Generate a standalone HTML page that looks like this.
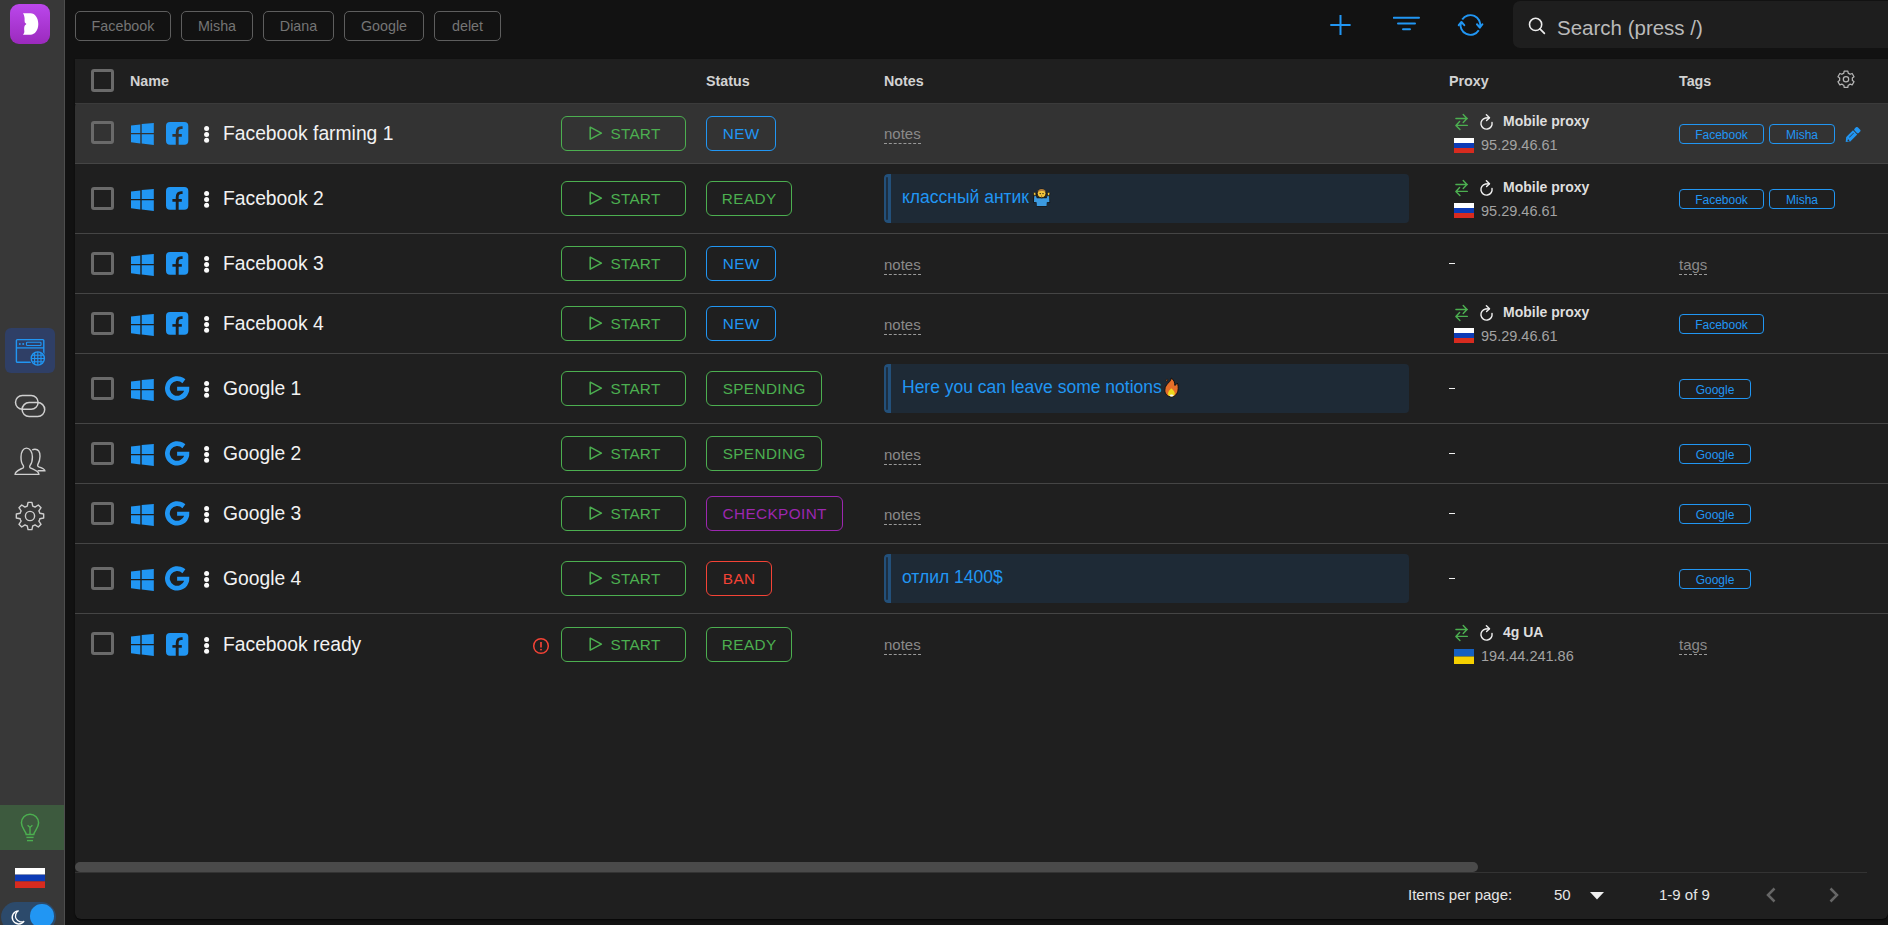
<!DOCTYPE html><html><head><meta charset="utf-8"><style>
*{box-sizing:border-box;margin:0;padding:0}
svg{display:block}
.emo{display:inline-block;vertical-align:top}
html,body{width:1888px;height:925px;overflow:hidden;background:#121212;font-family:"Liberation Sans",sans-serif;position:relative}
.a{position:absolute}
#side{left:0;top:0;width:65px;height:925px;background:#383838;border-right:1px solid #4e4e4e}
#logo{left:10px;top:4px;width:40px;height:40px;border-radius:9px;background:linear-gradient(180deg,#bb47ec,#9b2abd)}
.chip{top:11px;height:30px;border:1px solid #5e5e5e;border-radius:5px;color:#757575;font-size:14.3px;line-height:28px;text-align:center}
#search{left:1513px;top:1px;width:400px;height:47px;background:#1e1e1e;border-radius:7px}
#search .t{left:44px;top:2.5px;line-height:47px;font-size:20.5px;color:#bababa}
#tbl{left:75px;top:59px;width:1813px;height:860px;background:#1f1f1f;border-radius:0 0 6px 6px;overflow:hidden;box-shadow:0 1px 1.5px rgba(0,0,0,0.7)}
.hd{top:0;font-weight:bold;font-size:14.3px;color:#d2d2d2;line-height:44px}
.row{left:0;width:1813px}
.bd{border-bottom:1px solid #454545}
.cb{width:23px;height:23px;border:3px solid #6a6a6a;border-radius:3px}
.name{left:148px;font-size:19.3px;color:#f2f2f2;white-space:nowrap}
.btn{left:486px;width:125px;height:35px;border:1.5px solid #4caf50;border-radius:6px;color:#4caf50;font-size:15.3px;letter-spacing:0.25px;line-height:33px}
.st{left:631px;height:35px;border:1.5px solid;border-radius:6px;font-size:15.3px;letter-spacing:0.4px;line-height:33px;text-align:center;padding-left:0.4px}
.ph{font-size:15px;color:#8a8a8a;border-bottom:1px dashed #999;line-height:18px;white-space:nowrap}
.nbox{left:809px;width:525px;height:49px;background:#1e2a36;border-radius:4px;overflow:hidden}
.nbox .bar{left:0;top:0;width:7px;height:49px;background:#23507a;border-radius:4px 0 0 4px}
.nbox .bar2{left:2px;top:3px;width:2px;height:43px;background:#1c2f42;border-radius:1px}
.nbox .t{left:18px;top:0;line-height:47px;font-size:17.5px;color:#2196f3;white-space:nowrap}
.pn{font-weight:bold;font-size:14px;color:#dedede;white-space:nowrap}
.ip{font-size:14.5px;color:#a3a3a3;white-space:nowrap}
.tag{height:20px;border:1.5px solid #2196f3;border-radius:4px;color:#2196f3;font-size:12px;line-height:20.5px;text-align:center}
.dash{width:6px;height:1px;background:#f0f0f0}
</style></head><body>
<div id="side" class="a"></div>
<div id="logo" class="a"></div>
<div class="a" style="left:10px;top:4px"><svg width="40" height="40" viewBox="0 0 40 40" ><path d="M13 9.3 H20.5 C25 9.3 28.3 14.2 28.3 20 C28.3 26 25 30.7 20.5 30.7 H13 C14 29.5 14.5 28.5 14.3 27 C14.1 25 14 23 14.8 21.6 L16.4 20 L14.8 18.4 C14.4 16.5 14.8 14.8 14.4 13 C14.2 11.5 13.8 10.3 13 9.3 Z" fill="#fff"/></svg></div>
<div class="a" style="left:5px;top:328px;width:50px;height:45px;border-radius:6px;background:#2f3f66"></div>
<div class="a" style="left:15px;top:338px"><svg width="31" height="29" viewBox="0 0 31 29" ><rect x="1.4" y="1.6" width="27.4" height="22.6" rx="1" fill="none" stroke="#2196f3" stroke-width="1.4"/><line x1="1.4" y1="9.9" x2="28.8" y2="9.9" stroke="#2196f3" stroke-width="1.3"/><circle cx="4.8" cy="5.9" r="1" fill="#2196f3"/><circle cx="8.2" cy="5.9" r="1" fill="#2196f3"/><rect x="11.5" y="4.3" width="14.5" height="3.2" rx="0.8" fill="none" stroke="#2196f3" stroke-width="1.1"/><circle cx="22.8" cy="20.5" r="8" fill="#2f3f66"/><circle cx="22.8" cy="20.5" r="6.6" fill="none" stroke="#2196f3" stroke-width="1.4"/><clipPath id="gc"><circle cx="22.8" cy="20.5" r="6.4"/></clipPath><g clip-path="url(#gc)" stroke="#2196f3" stroke-width="1.1"><line x1="19.6" y1="13" x2="19.6" y2="28"/><line x1="26" y1="13" x2="26" y2="28"/><line x1="15" y1="17.3" x2="31" y2="17.3"/><line x1="15" y1="20.5" x2="31" y2="20.5"/><line x1="15" y1="23.7" x2="31" y2="23.7"/><line x1="22.8" y1="13" x2="22.8" y2="28"/></g></svg></div>
<div class="a" style="left:14px;top:394px"><svg width="32" height="24" viewBox="0 0 32 24" ><rect x="1.5" y="1.4" width="22.6" height="13.8" rx="6.9" fill="none" stroke="#cfcfcf" stroke-width="1.5"/><rect x="8.1" y="8.6" width="22.6" height="14" rx="7" fill="none" stroke="#cfcfcf" stroke-width="1.5"/></svg></div>
<div class="a" style="left:14px;top:447px"><svg width="32" height="29" viewBox="0 0 32 29" ><path d="M18.2 2.8 C19.2 2.3 20.2 2.2 21 2.2 C24 2.2 26 5 26 9.2 C26 12.6 25 15.4 23.8 17.6 C23.4 18.6 23.8 19.4 24.8 19.8 C28.4 21 30.9 22 30.9 23.8 H23.6" fill="none" stroke="#cfcfcf" stroke-width="1.4"/><path d="M1.1 27.4 C1.1 24 5 23 9.2 20.8 C9.8 20.4 9.6 19 9 18.2 C7.6 16.4 7 13.6 7 10 C7 4.6 9.2 1.1 12.5 1.1 C15.8 1.1 18.4 4.6 18.4 10 C18.4 13.6 17.6 16.4 16.2 18.2 C15.6 19 15.4 20.4 16.2 20.8 C20.4 23 24.9 24 24.9 27.4 Z" fill="#383838" stroke="#cfcfcf" stroke-width="1.4"/></svg></div>
<div class="a" style="left:15px;top:501px"><svg width="30" height="30" viewBox="0 0 30 30" ><path d="M24.50 11.28 L24.83 12.27 L28.66 13.06 L28.66 16.94 L24.83 17.73 L24.50 18.72 L24.35 19.09 L23.88 20.02 L26.04 23.29 L23.29 26.04 L20.02 23.88 L19.09 24.35 L18.72 24.50 L17.73 24.83 L16.94 28.66 L13.06 28.66 L12.27 24.83 L11.28 24.50 L10.91 24.35 L9.98 23.88 L6.71 26.04 L3.96 23.29 L6.12 20.02 L5.65 19.09 L5.50 18.72 L5.17 17.73 L1.34 16.94 L1.34 13.06 L5.17 12.27 L5.50 11.28 L5.65 10.91 L6.12 9.98 L3.96 6.71 L6.71 3.96 L9.98 6.12 L10.91 5.65 L11.28 5.50 L12.27 5.17 L13.06 1.34 L16.94 1.34 L17.73 5.17 L18.72 5.50 L19.09 5.65 L20.02 6.12 L23.29 3.96 L26.04 6.71 L23.88 9.98 L24.35 10.91Z" fill="none" stroke="#cfcfcf" stroke-width="1.4" stroke-linejoin="round"/><circle cx="15" cy="15" r="4.6" fill="none" stroke="#cfcfcf" stroke-width="1.4"/></svg></div>
<div class="a" style="left:0;top:805px;width:64px;height:45px;background:#3d5a3e"></div>
<div class="a" style="left:19px;top:812px"><svg width="22" height="32" viewBox="0 0 22 32" ><path d="M7.2 22.6 C7.2 19.4 2.4 16.4 2.4 10.8 A8.6 8.6 0 0 1 19.6 10.8 C19.6 16.4 14.8 19.4 14.8 22.6 Z" fill="none" stroke="#4caf50" stroke-width="1.5"/><path d="M8.6 13.2 L11 15.4 L13.4 13.2 M11 15.4 V22.6" fill="none" stroke="#4caf50" stroke-width="1.4"/><line x1="7.4" y1="25.4" x2="14.6" y2="25.4" stroke="#4caf50" stroke-width="1.4"/><line x1="8" y1="28.6" x2="14" y2="28.6" stroke="#4caf50" stroke-width="1.4"/></svg></div>
<div class="a" style="left:15px;top:868px;line-height:0"><svg width="30" height="20" viewBox="0 0 30 20" ><rect x="0" y="0" width="30" height="6.666666666666667" fill="#ffffff"/><rect x="0" y="6.666666666666667" width="30" height="6.666666666666667" fill="#0d3bb5"/><rect x="0" y="13.333333333333334" width="30" height="6.666666666666667" fill="#d72b1f"/></svg></div>
<div class="a" style="left:1px;top:902px;width:55px;height:30px;border-radius:15px;background:#2c4a6b"></div>
<div class="a" style="left:30px;top:904px;width:23.5px;height:23.5px;border-radius:50%;background:#2196f3"></div>
<div class="a" style="left:9px;top:909px"><svg width="16" height="16" viewBox="0 0 16 16" ><path d="M9.6 1.8 A6.6 6.6 0 1 0 15.2 12.2 A5 5 0 0 1 9.6 1.8 Z" fill="#2c4a6b" stroke="#ffffff" stroke-width="1.3"/></svg></div>
<div class="a chip" style="left:75px;width:96px">Facebook</div>
<div class="a chip" style="left:181px;width:72px">Misha</div>
<div class="a chip" style="left:263px;width:71px">Diana</div>
<div class="a chip" style="left:344px;width:80px">Google</div>
<div class="a chip" style="left:434px;width:67px">delet</div>
<div class="a" style="left:1329px;top:14px"><svg width="23" height="22" viewBox="0 0 23 22" ><path d="M11.5 1 V21 M1.3 11 H21.6" stroke="#2196f3" stroke-width="2"/></svg></div>
<div class="a" style="left:1393px;top:15px"><svg width="27" height="17" viewBox="0 0 27 17" ><path d="M0.8 2.7 H26 M5 8.4 H22 M10 14.3 H17" stroke="#2196f3" stroke-width="2" stroke-linecap="round"/></svg></div>
<div class="a" style="left:1457px;top:13px"><svg width="27" height="24" viewBox="0 0 27 24" ><g transform="translate(13.4 12) scale(0.94) translate(-13.4 -12)"><path d="M4.7 6.13 A10.5 10.5 0 0 1 23.63 14.36" fill="none" stroke="#2196f3" stroke-width="2.1"/><path d="M22.3 17.56 A10.5 10.5 0 0 1 3.36 8.93" fill="none" stroke="#2196f3" stroke-width="2.1"/><path d="M20.4 11.2 L23.4 14.8 L26.2 11.2" fill="none" stroke="#2196f3" stroke-width="2.1" stroke-linejoin="round" stroke-linecap="round"/><path d="M1 12.2 L3.9 8.8 L6.9 12.2" fill="none" stroke="#2196f3" stroke-width="2.1" stroke-linejoin="round" stroke-linecap="round"/></g></svg></div>
<div id="search" class="a"><div class="a" style="left:14px;top:15px"><svg width="19" height="19" viewBox="0 0 19 19" ><circle cx="8.6" cy="8.4" r="6.1" fill="none" stroke="#ececec" stroke-width="1.6"/><path d="M12.9 12.8 L17.4 17.4" stroke="#ececec" stroke-width="1.7" stroke-linecap="round"/></svg></div><div class="a t">Search (press /)</div></div>
<div id="tbl" class="a">
<div class="a cb" style="left:16px;top:10px"></div>
<div class="a hd" style="left:55px">Name</div>
<div class="a hd" style="left:631px">Status</div>
<div class="a hd" style="left:809px">Notes</div>
<div class="a hd" style="left:1374px">Proxy</div>
<div class="a hd" style="left:1604px">Tags</div>
<div class="a" style="left:1762px;top:11px"><svg width="18" height="18" viewBox="0 0 18 18" ><path d="M5.95 3.58 L6.81 3.19 L7.17 1.00 L10.83 1.00 L11.19 3.19 L12.05 3.58 L12.34 3.74 L13.11 4.29 L15.18 3.51 L17.02 6.69 L15.30 8.09 L15.40 9.03 L15.40 9.37 L15.30 10.31 L17.02 11.71 L15.18 14.89 L13.11 14.11 L12.34 14.66 L12.05 14.82 L11.19 15.21 L10.83 17.40 L7.17 17.40 L6.81 15.21 L5.95 14.82 L5.66 14.66 L4.89 14.11 L2.82 14.89 L0.98 11.71 L2.70 10.31 L2.60 9.37 L2.60 9.03 L2.70 8.09 L0.98 6.69 L2.82 3.51 L4.89 4.29 L5.66 3.74Z" fill="none" stroke="#b4b4b4" stroke-width="1.25" stroke-linejoin="round"/><circle cx="9" cy="9.2" r="2.7" fill="none" stroke="#b4b4b4" stroke-width="1.25"/></svg></div>
<div class="a row bd" style="top:44px;height:61px;background:#333333;border-top-left-radius:4px;">
<div class="a cb" style="left:16px;top:18.0px"></div>
<div class="a" style="left:56px;top:20.4px"><svg width="23" height="22" viewBox="0 0 23 22" ><polygon points="0,2.4 9.3,1.4 9.3,10 0,10" fill="#2196f3"/><polygon points="10.7,1.1 22.8,0 22.8,10 10.7,10" fill="#2196f3"/><polygon points="0,11.2 9.3,11.2 9.3,20.4 0,19.3" fill="#2196f3"/><polygon points="10.7,11.2 22.8,11.2 22.8,21.9 10.7,20.6" fill="#2196f3"/></svg></div>
<div class="a" style="left:91px;top:18.8px"><svg width="23" height="23" viewBox="0 0 23 23" ><rect x="0" y="0" width="22.3" height="22.8" rx="4" fill="#2196f3"/><path d="M11.2 23.5 V10.2 Q11.2 5.6 15.2 5.6 H16.6" fill="none" stroke="#333333" stroke-width="2.9"/><path d="M6.4 13.4 H15.8" fill="none" stroke="#333333" stroke-width="2.6"/></svg></div>
<div class="a" style="left:129px;top:22.6px"><svg width="6" height="17" viewBox="0 0 6 17" ><circle cx="2.6" cy="2.6" r="2.5" fill="#fafafa"/><circle cx="2.6" cy="8.4" r="2.5" fill="#fafafa"/><circle cx="2.6" cy="14.2" r="2.5" fill="#fafafa"/></svg></div>
<div class="a name" style="top:18.5px;line-height:23px">Facebook farming 1</div>
<div class="a btn" style="top:12.5px"><div class="a" style="left:26.8px;top:9px"><svg width="14" height="15" viewBox="0 0 14 15" ><path d="M1.2 1.2 L12.4 7.2 L1.2 13.2 Z" fill="none" stroke="#4caf50" stroke-width="1.5" stroke-linejoin="round"/></svg></div><div class="a" style="left:48.5px;top:0">START</div></div>
<div class="a st" style="top:12.5px;width:70px;border-color:#2196f3;color:#2196f3">NEW</div>
<div class="a ph" style="left:809px;top:22.0px">notes</div>
<div class="a" style="left:1380px;top:10.0px"><svg width="14" height="18" viewBox="0 0 14 18" ><path d="M0.9 5.5 H12.3 M8.2 1.4 L12 5.5 L8.2 9.5" fill="none" stroke="#4caf50" stroke-width="1.4" stroke-linejoin="round" stroke-linecap="round"/><path d="M12.3 12.4 H0.9 M4.6 8.4 L0.9 12.4 L4.9 16.4" fill="none" stroke="#4caf50" stroke-width="1.4" stroke-linejoin="round" stroke-linecap="round"/></svg></div>
<div class="a" style="left:1404px;top:9.0px"><svg width="15" height="19" viewBox="0 0 15 19" ><path d="M13.02 10.53 A5.6 5.6 0 1 1 6.53 5.99 L10.3 5.7" fill="none" stroke="#eeeeee" stroke-width="1.45" stroke-linecap="round" stroke-linejoin="round"/><path d="M7.4 2.8 L10.5 5.7 L7.6 8.5" fill="none" stroke="#eeeeee" stroke-width="1.45" stroke-linecap="round" stroke-linejoin="round"/></svg></div>
<div class="a pn" style="left:1428px;top:9.0px;line-height:18px">Mobile proxy</div>
<div class="a" style="left:1379px;top:34.5px;line-height:0"><svg width="20" height="15" viewBox="0 0 20 15" ><rect x="0" y="0" width="20" height="5.0" fill="#ffffff"/><rect x="0" y="5.0" width="20" height="5.0" fill="#0d3bb5"/><rect x="0" y="10.0" width="20" height="5.0" fill="#d72b1f"/></svg></div>
<div class="a ip" style="left:1406px;top:33.0px;line-height:18px">95.29.46.61</div>
<div class="a tag" style="left:1604px;top:20.5px;width:85px">Facebook</div>
<div class="a tag" style="left:1694px;top:20.5px;width:66px">Misha</div>
<div class="a" style="left:1767px;top:22.0px"><svg width="20" height="20" viewBox="0 0 20 20" ><g transform="translate(10.2 10.2) rotate(-45)"><path d="M-9.4 0.2 L-5.6 -2.9 L-5.6 3.1 Z" fill="#2196f3"/><rect x="-5.8" y="-2.9" width="9.8" height="6" fill="#2196f3"/><rect x="4.9" y="-2.9" width="4.6" height="6" rx="1.3" fill="#2196f3"/><rect x="-3.6" y="-0.9" width="6.2" height="0.8" fill="#2a4a66"/><circle cx="-6.4" cy="0.9" r="0.8" fill="#333"/></g></svg></div>
</div>
<div class="a row bd" style="top:105px;height:70px;background:#1f1f1f;">
<div class="a cb" style="left:16px;top:22.5px"></div>
<div class="a" style="left:56px;top:24.9px"><svg width="23" height="22" viewBox="0 0 23 22" ><polygon points="0,2.4 9.3,1.4 9.3,10 0,10" fill="#2196f3"/><polygon points="10.7,1.1 22.8,0 22.8,10 10.7,10" fill="#2196f3"/><polygon points="0,11.2 9.3,11.2 9.3,20.4 0,19.3" fill="#2196f3"/><polygon points="10.7,11.2 22.8,11.2 22.8,21.9 10.7,20.6" fill="#2196f3"/></svg></div>
<div class="a" style="left:91px;top:23.3px"><svg width="23" height="23" viewBox="0 0 23 23" ><rect x="0" y="0" width="22.3" height="22.8" rx="4" fill="#2196f3"/><path d="M11.2 23.5 V10.2 Q11.2 5.6 15.2 5.6 H16.6" fill="none" stroke="#1f1f1f" stroke-width="2.9"/><path d="M6.4 13.4 H15.8" fill="none" stroke="#1f1f1f" stroke-width="2.6"/></svg></div>
<div class="a" style="left:129px;top:27.1px"><svg width="6" height="17" viewBox="0 0 6 17" ><circle cx="2.6" cy="2.6" r="2.5" fill="#fafafa"/><circle cx="2.6" cy="8.4" r="2.5" fill="#fafafa"/><circle cx="2.6" cy="14.2" r="2.5" fill="#fafafa"/></svg></div>
<div class="a name" style="top:23.0px;line-height:23px">Facebook 2</div>
<div class="a btn" style="top:17.0px"><div class="a" style="left:26.8px;top:9px"><svg width="14" height="15" viewBox="0 0 14 15" ><path d="M1.2 1.2 L12.4 7.2 L1.2 13.2 Z" fill="none" stroke="#4caf50" stroke-width="1.5" stroke-linejoin="round"/></svg></div><div class="a" style="left:48.5px;top:0">START</div></div>
<div class="a st" style="top:17.0px;width:86px;border-color:#4caf50;color:#4caf50">READY</div>
<div class="a nbox" style="top:10.0px"><div class="a bar"></div><div class="a bar2"></div><div class="a t">классный антик<svg class="emo" style="margin:14px 0 0 3px" width="20" height="20" viewBox="0 0 20 20"><path d="M1.6 6.6 L4.2 6.4 L4.6 9.4 L14.8 9.4 L15.2 6.4 L17.8 6.6 L18.2 14.6 L15.2 15 L14.8 18.6 L4.6 18.6 L4.2 15 L1.2 14.6 Z" fill="#111"/><path d="M2.2 7.6 L3.8 7.4 L4.8 10.2 L14.6 10.2 L15.6 7.4 L17.2 7.6 L17.4 14 L14.8 14.2 L14.6 18 L4.8 18 L4.6 14.2 L2 14 Z" fill="#3c9ae0"/><path d="M1.4 5.2 Q2.6 3.4 4 5.4 L3.8 7.6 L2 7.8 Z" fill="#f2c53c" stroke="#111" stroke-width="0.7"/><path d="M18 5.2 Q16.8 3.4 15.4 5.4 L15.6 7.6 L17.4 7.8 Z" fill="#f2c53c" stroke="#111" stroke-width="0.7"/><circle cx="9.6" cy="5.4" r="4.4" fill="#f2c53c" stroke="#111" stroke-width="0.9"/><path d="M5.6 4.4 Q6.4 1 9.6 1 Q12.8 1 13.6 4.2 Q11.6 2.6 9.6 3 Q7.4 3 5.6 4.4Z" fill="#b07a3a"/><circle cx="8.2" cy="5.6" r="0.7" fill="#111"/><circle cx="11" cy="5.6" r="0.7" fill="#111"/><circle cx="9.6" cy="8" r="0.6" fill="#6b3b1e"/></svg></div></div>
<div class="a" style="left:1380px;top:14.5px"><svg width="14" height="18" viewBox="0 0 14 18" ><path d="M0.9 5.5 H12.3 M8.2 1.4 L12 5.5 L8.2 9.5" fill="none" stroke="#4caf50" stroke-width="1.4" stroke-linejoin="round" stroke-linecap="round"/><path d="M12.3 12.4 H0.9 M4.6 8.4 L0.9 12.4 L4.9 16.4" fill="none" stroke="#4caf50" stroke-width="1.4" stroke-linejoin="round" stroke-linecap="round"/></svg></div>
<div class="a" style="left:1404px;top:13.5px"><svg width="15" height="19" viewBox="0 0 15 19" ><path d="M13.02 10.53 A5.6 5.6 0 1 1 6.53 5.99 L10.3 5.7" fill="none" stroke="#eeeeee" stroke-width="1.45" stroke-linecap="round" stroke-linejoin="round"/><path d="M7.4 2.8 L10.5 5.7 L7.6 8.5" fill="none" stroke="#eeeeee" stroke-width="1.45" stroke-linecap="round" stroke-linejoin="round"/></svg></div>
<div class="a pn" style="left:1428px;top:13.5px;line-height:18px">Mobile proxy</div>
<div class="a" style="left:1379px;top:39.0px;line-height:0"><svg width="20" height="15" viewBox="0 0 20 15" ><rect x="0" y="0" width="20" height="5.0" fill="#ffffff"/><rect x="0" y="5.0" width="20" height="5.0" fill="#0d3bb5"/><rect x="0" y="10.0" width="20" height="5.0" fill="#d72b1f"/></svg></div>
<div class="a ip" style="left:1406px;top:37.5px;line-height:18px">95.29.46.61</div>
<div class="a tag" style="left:1604px;top:25.0px;width:85px">Facebook</div>
<div class="a tag" style="left:1694px;top:25.0px;width:66px">Misha</div>
</div>
<div class="a row bd" style="top:175px;height:60px;background:#1f1f1f;">
<div class="a cb" style="left:16px;top:17.5px"></div>
<div class="a" style="left:56px;top:19.9px"><svg width="23" height="22" viewBox="0 0 23 22" ><polygon points="0,2.4 9.3,1.4 9.3,10 0,10" fill="#2196f3"/><polygon points="10.7,1.1 22.8,0 22.8,10 10.7,10" fill="#2196f3"/><polygon points="0,11.2 9.3,11.2 9.3,20.4 0,19.3" fill="#2196f3"/><polygon points="10.7,11.2 22.8,11.2 22.8,21.9 10.7,20.6" fill="#2196f3"/></svg></div>
<div class="a" style="left:91px;top:18.3px"><svg width="23" height="23" viewBox="0 0 23 23" ><rect x="0" y="0" width="22.3" height="22.8" rx="4" fill="#2196f3"/><path d="M11.2 23.5 V10.2 Q11.2 5.6 15.2 5.6 H16.6" fill="none" stroke="#1f1f1f" stroke-width="2.9"/><path d="M6.4 13.4 H15.8" fill="none" stroke="#1f1f1f" stroke-width="2.6"/></svg></div>
<div class="a" style="left:129px;top:22.1px"><svg width="6" height="17" viewBox="0 0 6 17" ><circle cx="2.6" cy="2.6" r="2.5" fill="#fafafa"/><circle cx="2.6" cy="8.4" r="2.5" fill="#fafafa"/><circle cx="2.6" cy="14.2" r="2.5" fill="#fafafa"/></svg></div>
<div class="a name" style="top:18.0px;line-height:23px">Facebook 3</div>
<div class="a btn" style="top:12.0px"><div class="a" style="left:26.8px;top:9px"><svg width="14" height="15" viewBox="0 0 14 15" ><path d="M1.2 1.2 L12.4 7.2 L1.2 13.2 Z" fill="none" stroke="#4caf50" stroke-width="1.5" stroke-linejoin="round"/></svg></div><div class="a" style="left:48.5px;top:0">START</div></div>
<div class="a st" style="top:12.0px;width:70px;border-color:#2196f3;color:#2196f3">NEW</div>
<div class="a ph" style="left:809px;top:21.5px">notes</div>
<div class="a dash" style="left:1374px;top:29px"></div>
<div class="a ph" style="left:1604px;top:21.5px">tags</div>
</div>
<div class="a row bd" style="top:235px;height:60px;background:#1f1f1f;">
<div class="a cb" style="left:16px;top:17.5px"></div>
<div class="a" style="left:56px;top:19.9px"><svg width="23" height="22" viewBox="0 0 23 22" ><polygon points="0,2.4 9.3,1.4 9.3,10 0,10" fill="#2196f3"/><polygon points="10.7,1.1 22.8,0 22.8,10 10.7,10" fill="#2196f3"/><polygon points="0,11.2 9.3,11.2 9.3,20.4 0,19.3" fill="#2196f3"/><polygon points="10.7,11.2 22.8,11.2 22.8,21.9 10.7,20.6" fill="#2196f3"/></svg></div>
<div class="a" style="left:91px;top:18.3px"><svg width="23" height="23" viewBox="0 0 23 23" ><rect x="0" y="0" width="22.3" height="22.8" rx="4" fill="#2196f3"/><path d="M11.2 23.5 V10.2 Q11.2 5.6 15.2 5.6 H16.6" fill="none" stroke="#1f1f1f" stroke-width="2.9"/><path d="M6.4 13.4 H15.8" fill="none" stroke="#1f1f1f" stroke-width="2.6"/></svg></div>
<div class="a" style="left:129px;top:22.1px"><svg width="6" height="17" viewBox="0 0 6 17" ><circle cx="2.6" cy="2.6" r="2.5" fill="#fafafa"/><circle cx="2.6" cy="8.4" r="2.5" fill="#fafafa"/><circle cx="2.6" cy="14.2" r="2.5" fill="#fafafa"/></svg></div>
<div class="a name" style="top:18.0px;line-height:23px">Facebook 4</div>
<div class="a btn" style="top:12.0px"><div class="a" style="left:26.8px;top:9px"><svg width="14" height="15" viewBox="0 0 14 15" ><path d="M1.2 1.2 L12.4 7.2 L1.2 13.2 Z" fill="none" stroke="#4caf50" stroke-width="1.5" stroke-linejoin="round"/></svg></div><div class="a" style="left:48.5px;top:0">START</div></div>
<div class="a st" style="top:12.0px;width:70px;border-color:#2196f3;color:#2196f3">NEW</div>
<div class="a ph" style="left:809px;top:21.5px">notes</div>
<div class="a" style="left:1380px;top:9.5px"><svg width="14" height="18" viewBox="0 0 14 18" ><path d="M0.9 5.5 H12.3 M8.2 1.4 L12 5.5 L8.2 9.5" fill="none" stroke="#4caf50" stroke-width="1.4" stroke-linejoin="round" stroke-linecap="round"/><path d="M12.3 12.4 H0.9 M4.6 8.4 L0.9 12.4 L4.9 16.4" fill="none" stroke="#4caf50" stroke-width="1.4" stroke-linejoin="round" stroke-linecap="round"/></svg></div>
<div class="a" style="left:1404px;top:8.5px"><svg width="15" height="19" viewBox="0 0 15 19" ><path d="M13.02 10.53 A5.6 5.6 0 1 1 6.53 5.99 L10.3 5.7" fill="none" stroke="#eeeeee" stroke-width="1.45" stroke-linecap="round" stroke-linejoin="round"/><path d="M7.4 2.8 L10.5 5.7 L7.6 8.5" fill="none" stroke="#eeeeee" stroke-width="1.45" stroke-linecap="round" stroke-linejoin="round"/></svg></div>
<div class="a pn" style="left:1428px;top:8.5px;line-height:18px">Mobile proxy</div>
<div class="a" style="left:1379px;top:34.0px;line-height:0"><svg width="20" height="15" viewBox="0 0 20 15" ><rect x="0" y="0" width="20" height="5.0" fill="#ffffff"/><rect x="0" y="5.0" width="20" height="5.0" fill="#0d3bb5"/><rect x="0" y="10.0" width="20" height="5.0" fill="#d72b1f"/></svg></div>
<div class="a ip" style="left:1406px;top:32.5px;line-height:18px">95.29.46.61</div>
<div class="a tag" style="left:1604px;top:20.0px;width:85px">Facebook</div>
</div>
<div class="a row bd" style="top:295px;height:70px;background:#1f1f1f;">
<div class="a cb" style="left:16px;top:22.5px"></div>
<div class="a" style="left:56px;top:24.9px"><svg width="23" height="22" viewBox="0 0 23 22" ><polygon points="0,2.4 9.3,1.4 9.3,10 0,10" fill="#2196f3"/><polygon points="10.7,1.1 22.8,0 22.8,10 10.7,10" fill="#2196f3"/><polygon points="0,11.2 9.3,11.2 9.3,20.4 0,19.3" fill="#2196f3"/><polygon points="10.7,11.2 22.8,11.2 22.8,21.9 10.7,20.6" fill="#2196f3"/></svg></div>
<div class="a" style="left:90.3px;top:22.3px"><svg width="25" height="25" viewBox="0 0 25 25" ><path d="M20.36 3.33 A12.2 12.2 0 1 0 24.16 14.8 L24.3 10.7 L12.1 10.7 L12.1 14.8 L19.2 14.8 A7.4 7.4 0 1 1 17.43 7.17 Z" fill="#2196f3"/></svg></div>
<div class="a" style="left:129px;top:27.1px"><svg width="6" height="17" viewBox="0 0 6 17" ><circle cx="2.6" cy="2.6" r="2.5" fill="#fafafa"/><circle cx="2.6" cy="8.4" r="2.5" fill="#fafafa"/><circle cx="2.6" cy="14.2" r="2.5" fill="#fafafa"/></svg></div>
<div class="a name" style="top:23.0px;line-height:23px">Google 1</div>
<div class="a btn" style="top:17.0px"><div class="a" style="left:26.8px;top:9px"><svg width="14" height="15" viewBox="0 0 14 15" ><path d="M1.2 1.2 L12.4 7.2 L1.2 13.2 Z" fill="none" stroke="#4caf50" stroke-width="1.5" stroke-linejoin="round"/></svg></div><div class="a" style="left:48.5px;top:0">START</div></div>
<div class="a st" style="top:17.0px;width:116px;border-color:#4caf50;color:#4caf50">SPENDING</div>
<div class="a nbox" style="top:10.0px"><div class="a bar"></div><div class="a bar2"></div><div class="a t">Here you can leave some notions<svg class="emo" style="margin:13px 0 0 2px" width="15" height="21" viewBox="0 0 15 21"><path d="M7.2 1 C9.8 2.6 11 5.4 10.8 8.4 C12 7.8 12.8 7 13.4 6 C14.2 8.4 14.4 10.8 14 13.2 C13.4 17.2 10.8 19.8 7.4 19.8 C3.6 19.8 0.8 17 0.8 13 C0.8 8.8 3.8 6.6 5.6 4.6 C6.6 3.4 7.2 2.4 7.2 1Z" fill="#e56e29" stroke="#111" stroke-width="1"/><path d="M2.4 2.4 Q3.6 1.4 3.8 3 Q3.4 4.4 2.4 4.4 Q1.6 3.4 2.4 2.4Z" fill="#e56e29" stroke="#111" stroke-width="0.7"/><path d="M7.2 11.2 C9 12.6 11 14.6 10.8 16.8 C10.6 18.6 9.2 19.4 7.4 19.4 C5.4 19.4 3.8 18.4 4 16.4 C4.2 14.2 6 12.8 7.2 11.2Z" fill="#ecd81e"/><ellipse cx="7.6" cy="18.4" rx="2" ry="1" fill="#f4f4f4"/></svg></div></div>
<div class="a dash" style="left:1374px;top:34px"></div>
<div class="a tag" style="left:1604px;top:25.0px;width:72px">Google</div>
</div>
<div class="a row bd" style="top:365px;height:60px;background:#1f1f1f;">
<div class="a cb" style="left:16px;top:17.5px"></div>
<div class="a" style="left:56px;top:19.9px"><svg width="23" height="22" viewBox="0 0 23 22" ><polygon points="0,2.4 9.3,1.4 9.3,10 0,10" fill="#2196f3"/><polygon points="10.7,1.1 22.8,0 22.8,10 10.7,10" fill="#2196f3"/><polygon points="0,11.2 9.3,11.2 9.3,20.4 0,19.3" fill="#2196f3"/><polygon points="10.7,11.2 22.8,11.2 22.8,21.9 10.7,20.6" fill="#2196f3"/></svg></div>
<div class="a" style="left:90.3px;top:17.3px"><svg width="25" height="25" viewBox="0 0 25 25" ><path d="M20.36 3.33 A12.2 12.2 0 1 0 24.16 14.8 L24.3 10.7 L12.1 10.7 L12.1 14.8 L19.2 14.8 A7.4 7.4 0 1 1 17.43 7.17 Z" fill="#2196f3"/></svg></div>
<div class="a" style="left:129px;top:22.1px"><svg width="6" height="17" viewBox="0 0 6 17" ><circle cx="2.6" cy="2.6" r="2.5" fill="#fafafa"/><circle cx="2.6" cy="8.4" r="2.5" fill="#fafafa"/><circle cx="2.6" cy="14.2" r="2.5" fill="#fafafa"/></svg></div>
<div class="a name" style="top:18.0px;line-height:23px">Google 2</div>
<div class="a btn" style="top:12.0px"><div class="a" style="left:26.8px;top:9px"><svg width="14" height="15" viewBox="0 0 14 15" ><path d="M1.2 1.2 L12.4 7.2 L1.2 13.2 Z" fill="none" stroke="#4caf50" stroke-width="1.5" stroke-linejoin="round"/></svg></div><div class="a" style="left:48.5px;top:0">START</div></div>
<div class="a st" style="top:12.0px;width:116px;border-color:#4caf50;color:#4caf50">SPENDING</div>
<div class="a ph" style="left:809px;top:21.5px">notes</div>
<div class="a dash" style="left:1374px;top:29px"></div>
<div class="a tag" style="left:1604px;top:20.0px;width:72px">Google</div>
</div>
<div class="a row bd" style="top:425px;height:60px;background:#1f1f1f;">
<div class="a cb" style="left:16px;top:17.5px"></div>
<div class="a" style="left:56px;top:19.9px"><svg width="23" height="22" viewBox="0 0 23 22" ><polygon points="0,2.4 9.3,1.4 9.3,10 0,10" fill="#2196f3"/><polygon points="10.7,1.1 22.8,0 22.8,10 10.7,10" fill="#2196f3"/><polygon points="0,11.2 9.3,11.2 9.3,20.4 0,19.3" fill="#2196f3"/><polygon points="10.7,11.2 22.8,11.2 22.8,21.9 10.7,20.6" fill="#2196f3"/></svg></div>
<div class="a" style="left:90.3px;top:17.3px"><svg width="25" height="25" viewBox="0 0 25 25" ><path d="M20.36 3.33 A12.2 12.2 0 1 0 24.16 14.8 L24.3 10.7 L12.1 10.7 L12.1 14.8 L19.2 14.8 A7.4 7.4 0 1 1 17.43 7.17 Z" fill="#2196f3"/></svg></div>
<div class="a" style="left:129px;top:22.1px"><svg width="6" height="17" viewBox="0 0 6 17" ><circle cx="2.6" cy="2.6" r="2.5" fill="#fafafa"/><circle cx="2.6" cy="8.4" r="2.5" fill="#fafafa"/><circle cx="2.6" cy="14.2" r="2.5" fill="#fafafa"/></svg></div>
<div class="a name" style="top:18.0px;line-height:23px">Google 3</div>
<div class="a btn" style="top:12.0px"><div class="a" style="left:26.8px;top:9px"><svg width="14" height="15" viewBox="0 0 14 15" ><path d="M1.2 1.2 L12.4 7.2 L1.2 13.2 Z" fill="none" stroke="#4caf50" stroke-width="1.5" stroke-linejoin="round"/></svg></div><div class="a" style="left:48.5px;top:0">START</div></div>
<div class="a st" style="top:12.0px;width:137px;border-color:#9c27b0;color:#9c27b0">CHECKPOINT</div>
<div class="a ph" style="left:809px;top:21.5px">notes</div>
<div class="a dash" style="left:1374px;top:29px"></div>
<div class="a tag" style="left:1604px;top:20.0px;width:72px">Google</div>
</div>
<div class="a row bd" style="top:485px;height:70px;background:#1f1f1f;">
<div class="a cb" style="left:16px;top:22.5px"></div>
<div class="a" style="left:56px;top:24.9px"><svg width="23" height="22" viewBox="0 0 23 22" ><polygon points="0,2.4 9.3,1.4 9.3,10 0,10" fill="#2196f3"/><polygon points="10.7,1.1 22.8,0 22.8,10 10.7,10" fill="#2196f3"/><polygon points="0,11.2 9.3,11.2 9.3,20.4 0,19.3" fill="#2196f3"/><polygon points="10.7,11.2 22.8,11.2 22.8,21.9 10.7,20.6" fill="#2196f3"/></svg></div>
<div class="a" style="left:90.3px;top:22.3px"><svg width="25" height="25" viewBox="0 0 25 25" ><path d="M20.36 3.33 A12.2 12.2 0 1 0 24.16 14.8 L24.3 10.7 L12.1 10.7 L12.1 14.8 L19.2 14.8 A7.4 7.4 0 1 1 17.43 7.17 Z" fill="#2196f3"/></svg></div>
<div class="a" style="left:129px;top:27.1px"><svg width="6" height="17" viewBox="0 0 6 17" ><circle cx="2.6" cy="2.6" r="2.5" fill="#fafafa"/><circle cx="2.6" cy="8.4" r="2.5" fill="#fafafa"/><circle cx="2.6" cy="14.2" r="2.5" fill="#fafafa"/></svg></div>
<div class="a name" style="top:23.0px;line-height:23px">Google 4</div>
<div class="a btn" style="top:17.0px"><div class="a" style="left:26.8px;top:9px"><svg width="14" height="15" viewBox="0 0 14 15" ><path d="M1.2 1.2 L12.4 7.2 L1.2 13.2 Z" fill="none" stroke="#4caf50" stroke-width="1.5" stroke-linejoin="round"/></svg></div><div class="a" style="left:48.5px;top:0">START</div></div>
<div class="a st" style="top:17.0px;width:66px;border-color:#f44336;color:#f44336">BAN</div>
<div class="a nbox" style="top:10.0px"><div class="a bar"></div><div class="a bar2"></div><div class="a t">отлил 1400$</div></div>
<div class="a dash" style="left:1374px;top:34px"></div>
<div class="a tag" style="left:1604px;top:25.0px;width:72px">Google</div>
</div>
<div class="a row" style="top:555px;height:60px;background:#1f1f1f;">
<div class="a cb" style="left:16px;top:18.0px"></div>
<div class="a" style="left:56px;top:20.4px"><svg width="23" height="22" viewBox="0 0 23 22" ><polygon points="0,2.4 9.3,1.4 9.3,10 0,10" fill="#2196f3"/><polygon points="10.7,1.1 22.8,0 22.8,10 10.7,10" fill="#2196f3"/><polygon points="0,11.2 9.3,11.2 9.3,20.4 0,19.3" fill="#2196f3"/><polygon points="10.7,11.2 22.8,11.2 22.8,21.9 10.7,20.6" fill="#2196f3"/></svg></div>
<div class="a" style="left:91px;top:18.8px"><svg width="23" height="23" viewBox="0 0 23 23" ><rect x="0" y="0" width="22.3" height="22.8" rx="4" fill="#2196f3"/><path d="M11.2 23.5 V10.2 Q11.2 5.6 15.2 5.6 H16.6" fill="none" stroke="#1f1f1f" stroke-width="2.9"/><path d="M6.4 13.4 H15.8" fill="none" stroke="#1f1f1f" stroke-width="2.6"/></svg></div>
<div class="a" style="left:129px;top:22.6px"><svg width="6" height="17" viewBox="0 0 6 17" ><circle cx="2.6" cy="2.6" r="2.5" fill="#fafafa"/><circle cx="2.6" cy="8.4" r="2.5" fill="#fafafa"/><circle cx="2.6" cy="14.2" r="2.5" fill="#fafafa"/></svg></div>
<div class="a name" style="top:18.5px;line-height:23px">Facebook ready</div>
<div class="a" style="left:457px;top:22.5px"><svg width="18" height="18" viewBox="0 0 18 18" ><circle cx="9" cy="9" r="7.3" fill="none" stroke="#f44336" stroke-width="1.5"/><path d="M9 5 V10.4" stroke="#f44336" stroke-width="1.7"/><circle cx="9" cy="12.6" r="0.95" fill="#f44336"/></svg></div>
<div class="a btn" style="top:12.5px"><div class="a" style="left:26.8px;top:9px"><svg width="14" height="15" viewBox="0 0 14 15" ><path d="M1.2 1.2 L12.4 7.2 L1.2 13.2 Z" fill="none" stroke="#4caf50" stroke-width="1.5" stroke-linejoin="round"/></svg></div><div class="a" style="left:48.5px;top:0">START</div></div>
<div class="a st" style="top:12.5px;width:86px;border-color:#4caf50;color:#4caf50">READY</div>
<div class="a ph" style="left:809px;top:22.0px">notes</div>
<div class="a" style="left:1380px;top:10.0px"><svg width="14" height="18" viewBox="0 0 14 18" ><path d="M0.9 5.5 H12.3 M8.2 1.4 L12 5.5 L8.2 9.5" fill="none" stroke="#4caf50" stroke-width="1.4" stroke-linejoin="round" stroke-linecap="round"/><path d="M12.3 12.4 H0.9 M4.6 8.4 L0.9 12.4 L4.9 16.4" fill="none" stroke="#4caf50" stroke-width="1.4" stroke-linejoin="round" stroke-linecap="round"/></svg></div>
<div class="a" style="left:1404px;top:9.0px"><svg width="15" height="19" viewBox="0 0 15 19" ><path d="M13.02 10.53 A5.6 5.6 0 1 1 6.53 5.99 L10.3 5.7" fill="none" stroke="#eeeeee" stroke-width="1.45" stroke-linecap="round" stroke-linejoin="round"/><path d="M7.4 2.8 L10.5 5.7 L7.6 8.5" fill="none" stroke="#eeeeee" stroke-width="1.45" stroke-linecap="round" stroke-linejoin="round"/></svg></div>
<div class="a pn" style="left:1428px;top:9.0px;line-height:18px">4g UA</div>
<div class="a" style="left:1379px;top:34.5px;line-height:0"><svg width="20" height="15" viewBox="0 0 20 15" ><rect x="0" y="0" width="20" height="7.5" fill="#1560c0"/><rect x="0" y="7.5" width="20" height="7.5" fill="#f5d000"/></svg></div>
<div class="a ip" style="left:1406px;top:33.0px;line-height:18px">194.44.241.86</div>
<div class="a ph" style="left:1604px;top:22.0px">tags</div>
</div>
<div class="a" style="left:0;top:44px;width:1813px;height:1px;background:#3b3b3b"></div>
<div class="a" style="left:0;top:803px;width:1403px;height:10px;border-radius:5px;background:#4a4a4a"></div>
<div class="a" style="left:0;top:813px;width:1792px;height:1px;background:#333"></div>
<div class="a" style="left:1333px;top:826px;font-size:15px;color:#e6e6e6;line-height:20px">Items per page:</div>
<div class="a" style="left:1479px;top:826px;font-size:15px;color:#e6e6e6;line-height:20px">50</div>
<div class="a" style="left:1515px;top:833px"><svg width="14" height="8" viewBox="0 0 14 8" ><path d="M0 0 H14 L7 7.5Z" fill="#f0f0f0"/></svg></div>
<div class="a" style="left:1584px;top:826px;font-size:15px;color:#e6e6e6;line-height:20px">1-9 of 9</div>
<div class="a" style="left:1690px;top:828px"><svg width="12" height="16" viewBox="0 0 12 16" ><path d="M9.5 1.5 L3 8 L9.5 14.5" fill="none" stroke="#666" stroke-width="2.5"/></svg></div>
<div class="a" style="left:1753px;top:828px"><svg width="12" height="16" viewBox="0 0 12 16" ><path d="M2.5 1.5 L9 8 L2.5 14.5" fill="none" stroke="#666" stroke-width="2.5"/></svg></div>
</div>
</body></html>
